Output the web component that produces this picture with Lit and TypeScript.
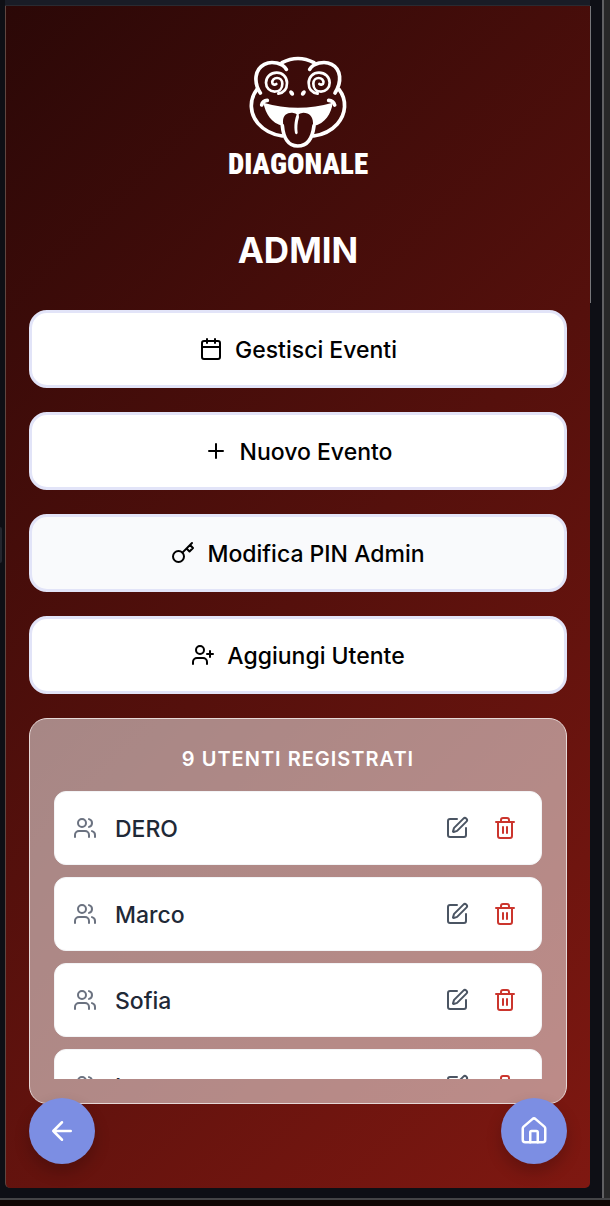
import { LitElement, html, css, svg } from "lit";
import { customElement, property } from "lit/decorators.js";

const ICONS = {
  calendar: svg`<path d="M8 2v4M16 2v4M3 10h18"/><rect x="3" y="4" width="18" height="18" rx="2"/>`,
  plus: svg`<path d="M5 12h14M12 5v14"/>`,
  key: svg`<circle cx="7.5" cy="15.5" r="5.5"/><path d="m21 2-9.6 9.6M15.5 7.5l3 3L22 7l-3-3"/>`,
  userPlus: svg`<path d="M16 21v-2a4 4 0 0 0-4-4H6a4 4 0 0 0-4 4v2"/><circle cx="9" cy="7" r="4"/><path d="M19 8v6M22 11h-6"/>`,
  users: svg`<path d="M16 21v-2a4 4 0 0 0-4-4H6a4 4 0 0 0-4 4v2"/><circle cx="9" cy="7" r="4"/><path d="M22 21v-2a4 4 0 0 0-3-3.87M16 3.13a4 4 0 0 1 0 7.75"/>`,
  edit: svg`<path d="M12 3H5a2 2 0 0 0-2 2v14a2 2 0 0 0 2 2h14a2 2 0 0 0 2-2v-7"/><path d="M18.375 2.625a1 1 0 0 1 3 3l-9.013 9.014a2 2 0 0 1-.853.505l-2.873.84a.5.5 0 0 1-.62-.62l.84-2.873a2 2 0 0 1 .506-.852z"/>`,
  trash: svg`<path d="M3 6h18M19 6v14a2 2 0 0 1-2 2H7a2 2 0 0 1-2-2V6M8 6V4a2 2 0 0 1 2-2h4a2 2 0 0 1 2 2v2M10 11v6M14 11v6"/>`,
  back: svg`<path d="m12 19-7-7 7-7M19 12H5"/>`,
  home: svg`<path d="M15 21v-8a1 1 0 0 0-1-1h-4a1 1 0 0 0-1 1v8"/><path d="M3 10a2 2 0 0 1 .709-1.528l7-5.999a2 2 0 0 1 2.582 0l7 5.999A2 2 0 0 1 21 10v9a2 2 0 0 1-2 2H5a2 2 0 0 1-2-2z"/>`,
};

type IconName = keyof typeof ICONS;

@customElement("line-icon")
export class LineIcon extends LitElement {
  @property() name: IconName = "plus";

  static styles = css`
    :host { display: block; flex: none; width: 24px; height: 24px; }
    .glyph {
      display: block; width: 100%; height: 100%;
      fill: none; stroke: currentColor; stroke-width: 2;
      stroke-linecap: round; stroke-linejoin: round;
    }
  `;

  render() {
    return html`<svg class="glyph" viewBox="0 0 24 24" aria-hidden="true">${ICONS[this.name]}</svg>`;
  }
}

@customElement("brand-logo")
export class BrandLogo extends LitElement {
  static styles = css`
    :host { display: flex; flex-direction: column; align-items: center; color: #fff; }
    .frog { display: block; width: 140px; height: 95px; }
    .line { fill: none; stroke: currentColor; stroke-width: 11; stroke-linecap: round; stroke-linejoin: round; }
    .thin { stroke-width: 8; }
    .solid { fill: currentColor; }
    .tongue { fill: #3e0b09; }
    .word {
      font: 900 29px/29px "Roboto Condensed", Roboto, "Liberation Sans", sans-serif;
    }
  `;

  render() {
    return html`
      <svg class="frog" viewBox="54 45 420 285" aria-hidden="true">
        <path class="line" d="M216 68Q264 43 312 68"/>
        <path class="line" d="M229 88C218 70 186 61 163 73C134 88 130 126 151 159"/>
        <path class="line" d="M299 88C310 70 342 61 365 73C394 88 396 126 375 159"/>
        <path class="line" d="M141 148C116 180 120 222 144 250C163 272 188 284 217 288"/>
        <path class="line" d="M387 148C412 180 408 222 382 252C364 272 340 284 311 288"/>
        <path class="line thin" d="M205 161C223 158 231 145 231 129C231 110 217 98 200 98C182 98 168 111 168 128C168 144 180 155 194 155C209 155 217 144 217 131C217 120 209 114 201 114C192 114 186 120 187 128C188 134 194 136 199 132"/>
        <path class="line thin" d="M323 161C305 158 296 145 296 129C296 110 310 98 327 98C345 98 359 111 359 128C359 144 347 155 333 155C318 155 310 144 310 131C310 120 318 114 326 114C335 114 341 120 340 128C339 134 333 136 328 132"/>
        <ellipse class="solid" cx="245" cy="159" rx="6" ry="9" transform="rotate(-35 245 159)"/>
        <ellipse class="solid" cx="280" cy="159" rx="6" ry="9" transform="rotate(35 280 159)"/>
        <path class="solid" d="M160 188Q264 218 368 188C364 222 344 250 312 258H218C184 248 167 222 160 188Z"/>
        <path class="line" d="M155 195Q158 182 172 181M374 195Q370 182 356 181"/>
        <path class="tongue" d="M219 244C219 225 232 217 247 218Q257 219 263 225Q269 219 280 218C298 218 309 230 309 248C309 285 299 318 264 318C233 318 220 285 219 244Z"/>
        <path class="line" d="M217 257C220 292 234 318 263 318C296 318 308 291 312 257"/>
        <path class="solid" d="M262 219Q268 222 267 232C262 248 261 264 263 279Q259 287 255 279C251 258 254 236 262 219Z"/>
      </svg>
      <span class="word">DIAGONALE</span>
    `;
  }
}

@customElement("app-root")
export class AppRoot extends LitElement {
  private actions: { icon: IconName; label: string; active?: boolean }[] = [
    { icon: "calendar", label: "Gestisci Eventi" },
    { icon: "plus", label: "Nuovo Evento" },
    { icon: "key", label: "Modifica PIN Admin", active: true },
    { icon: "userPlus", label: "Aggiungi Utente" },
  ];

  private users = ["DERO", "Marco", "Sofia", "Luca"];
  private total = 9;

  static styles = css`
    :host {
      display: block;
      font-family: Inter, "Liberation Sans", sans-serif;
    }
    * { box-sizing: border-box; }
    .desk {
      display: flex; flex-direction: column;
      min-height: 100vh;
      background: #100604;
    }
    .window {
      flex: 1; display: flex;
      margin-bottom: 6px;
      border-bottom: 2px solid #444446;
      background: #0e0f15;
    }
    .gutter { flex: none; width: 5px; display: flex; align-items: center; }
    .grip { width: 2px; height: 36px; margin-top: -108px; background: #24262e; border-radius: 0 2px 2px 0; }
    .view {
      flex: 1; min-width: 0;
      display: flex; flex-direction: column;
      padding-bottom: 10px;
    }
    .bar { flex: none; height: 6px; background: #191c26; border-bottom: 1px solid #2a2a31; }
    .panel {
      position: relative;
      flex: 1;
      padding: 49px 23px 84px;
      border-left: 1px solid #5f4640;
      border-radius: 0 0 5px 5px;
      background: linear-gradient(135deg, #2b0807, #7f1811);
    }
    .track { flex: none; width: 12px; padding-top: 6px; }
    .thumb { width: 1px; height: 297px; background: #77777a; }
    .edge { flex: none; width: 8px; border-left: 2px solid #606062; background: #282828; }

    .title {
      margin: 47px 0 36px;
      text-align: center; color: #fff;
      font-size: 35px; line-height: 48px; font-weight: 700;
    }
    .stack { display: flex; flex-direction: column; gap: 24px; }
    .action {
      display: flex; align-items: center; justify-content: center; gap: 12px;
      min-height: 78px; padding: 12px 24px;
      border: 3px solid #e2e4f8; border-radius: 18px;
      background: #fff; color: #000;
      font: inherit; font-size: 23px; line-height: 34px; font-weight: 500;
      cursor: pointer;
    }
    .action.active { background: #f9fafc; }
    .label { padding-top: 2px; }

    .card {
      padding: 24px;
      border: 1px solid #e6d8d7; border-radius: 18px;
      background: rgba(255, 255, 255, 0.5);
    }
    .count {
      margin: 0 0 16px;
      text-align: center; color: #fff;
      font-size: 20px; line-height: 32px; font-weight: 600; letter-spacing: 1px;
    }
    .list {
      display: flex; flex-direction: column; gap: 12px;
      height: 288px; margin: 0; padding: 0;
      overflow: hidden; list-style: none;
    }
    .row {
      flex: none; display: flex; align-items: center; gap: 12px;
      padding: 18px;
      border: 1px solid #f3f4f6; border-radius: 12px;
      background: #fff; color: #6b7280;
    }
    .name {
      flex: 1; min-width: 0; padding: 2px 0 0 6px;
      color: #1f2937; font-size: 23px; line-height: 34px; font-weight: 500;
    }
    .tool {
      flex: none; padding: 6px; border: 0; background: none;
      color: #4b5563; cursor: pointer;
    }
    .tool.danger { color: #cb352d; }

    .round {
      position: absolute; bottom: 24px;
      display: grid; place-items: center;
      width: 66px; height: 66px; padding: 0;
      border: 0; border-radius: 50%;
      background: #7c8ee3; color: #fff;
      box-shadow: 0 8px 16px rgba(0, 0, 0, 0.2);
      cursor: pointer;
    }
    .round line-icon { width: 30px; height: 30px; }
    .left { left: 23px; }
    .right { right: 23px; }
  `;

  render() {
    return html`
      <div class="desk">
        <div class="window">
          <div class="gutter"><div class="grip"></div></div>
          <div class="view">
            <div class="bar"></div>
            <main class="panel">
              <brand-logo></brand-logo>
              <h1 class="title">ADMIN</h1>
              <div class="stack">
                ${this.actions.map(
                  (a) => html`<button class="action ${a.active ? "active" : ""}" type="button">
                    <line-icon .name=${a.icon}></line-icon><span class="label">${a.label}</span>
                  </button>`
                )}
                <section class="card">
                  <h2 class="count">${this.total} UTENTI REGISTRATI</h2>
                  <ul class="list">
                    ${this.users.map(
                      (u) => html`<li class="row">
                        <line-icon .name=${"users"}></line-icon>
                        <span class="name">${u}</span>
                        <button class="tool" type="button" aria-label="Modifica"><line-icon .name=${"edit"}></line-icon></button>
                        <button class="tool danger" type="button" aria-label="Elimina"><line-icon .name=${"trash"}></line-icon></button>
                      </li>`
                    )}
                  </ul>
                </section>
              </div>
              <button class="round left" type="button" aria-label="Indietro"><line-icon .name=${"back"}></line-icon></button>
              <button class="round right" type="button" aria-label="Home"><line-icon .name=${"home"}></line-icon></button>
            </main>
          </div>
          <div class="track"><div class="thumb"></div></div>
          <div class="edge"></div>
        </div>
      </div>
    `;
  }
}
